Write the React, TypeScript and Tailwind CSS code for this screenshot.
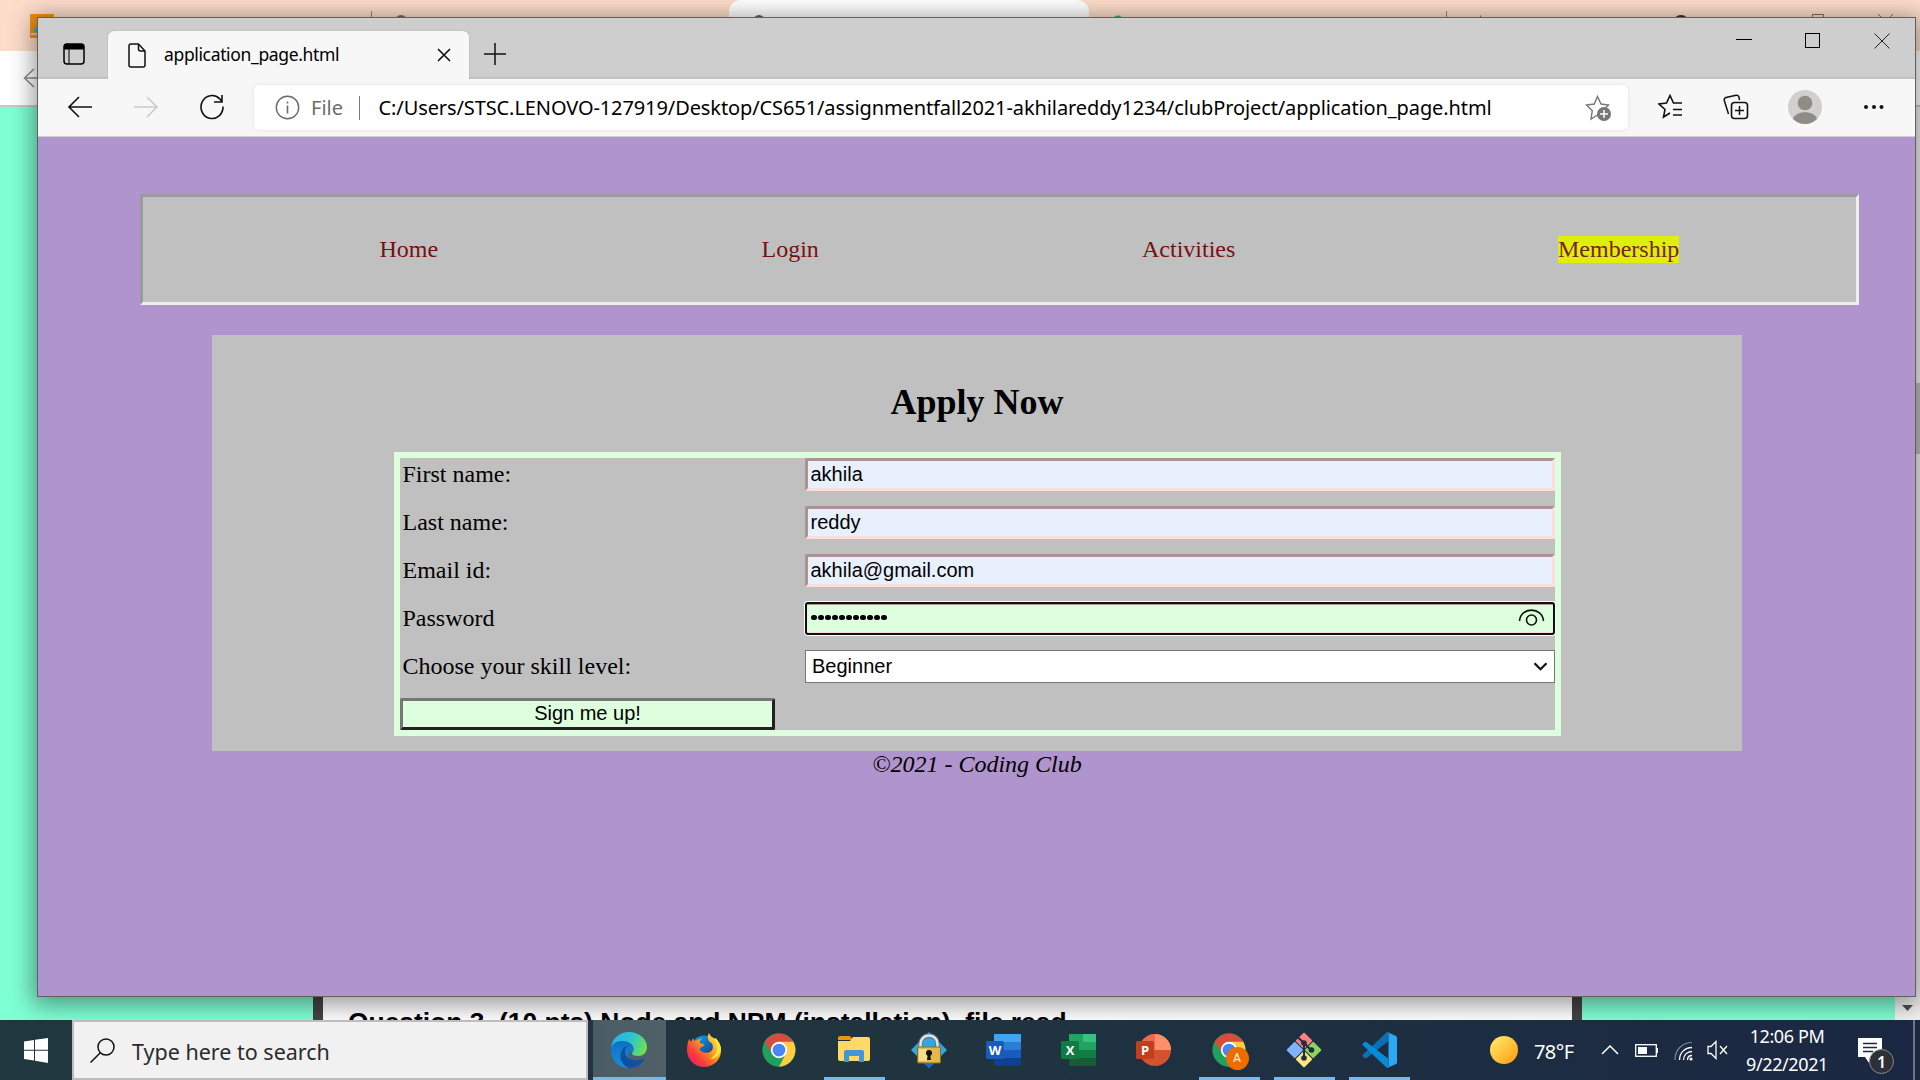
import React from "react";

const ui = "font-['Noto_Sans',sans-serif]";

function Svg({ w, h, vb, children, className = "" }: { w: number; h: number; vb?: string; children: React.ReactNode; className?: string }) {
  return (
    <svg width={w} height={h} viewBox={vb ?? `0 0 ${w} ${h}`} fill="none" className={`block shrink-0 ${className}`}>
      {children}
    </svg>
  );
}

function BackgroundWindow() {
  return (
    <div className="absolute inset-x-0 top-0 flex h-[1020px] flex-col overflow-hidden bg-[#7fffd4]">
      <div className="flex h-[51px] shrink-0 bg-[#fddcc9]">
        <Svg w={1920} h={51}>
          <rect x="30" y="14" width="24" height="24" fill="#f0930f" />
          <path d="M31 34h10" stroke="#fbd9c8" strokeWidth="1.5" />
          <circle cx="37" cy="30" r="3" fill="#35b5cc" />
          <path d="M371.500 11v14M1446.500 11v14" stroke="#9b8279" />
          <circle cx="401" cy="21" r="6" fill="#6a6a6a" />
          <path d="M729 51V12a12 12 0 0 1 12-12h336a12 12 0 0 1 12 12v39z" fill="#fff" />
          <circle cx="759" cy="21" r="6" fill="#5f6368" />
          <circle cx="1118" cy="21" r="7" fill="#d5e8db" />
          <circle cx="1118" cy="20" r="4.500" fill="#3daf6b" />
          <path d="M1480.500 15.500v10M1812.500 26V14.500h11V26M1878 14l15 15M1893 14l-15 15" stroke="#776660" />
          <circle cx="1681" cy="23" r="8" fill="#333" />
        </Svg>
      </div>
      <div className="flex h-[56px] shrink-0 items-center border-b-2 border-[#c8c8c8] bg-white pl-[23px]">
        <Svg w={26} h={20}>
          <path d="M11 1 1.500 10 11 19M1.500 10H26" stroke="#8a8a8a" strokeWidth="1.500" />
        </Svg>
      </div>
      <div className="flex flex-1">
        <div className="w-[313px]" />
        <div className="flex w-[1269px] items-end border-x-[10px] border-[#444] bg-white pl-[25px]">
          <p className="h-[12px] whitespace-nowrap font-['Liberation_Sans',sans-serif] text-[26.4px] leading-[28px] font-bold text-black">
            Question 3. (10 pts) Node and NPM (installation), file read
          </p>
        </div>
        <div className="flex-1" />
        <div className="flex w-[25px] flex-col items-end bg-[#f1f1f1]">
          <div className="mt-[276px] h-[71px] w-[22px] bg-[#c0c0c0]" />
          <Svg w={25} h={25} className="mt-auto">
            <path d="M7 10h11l-5.500 6z" fill="#505050" />
          </Svg>
        </div>
      </div>
    </div>
  );
}

function TabStrip() {
  return (
    <div className="flex h-[61px] shrink-0 items-end bg-[#cecece] shadow-[inset_0_-2px_1px_#c2c2c2]">
      <div className="flex h-full w-[70px] items-center pl-[25px] pt-[18px]">
        <Svg w={22} h={22} className="-mt-2">
          <rect x="1" y="1" width="20" height="20" rx="3" stroke="#000" strokeWidth="1.500" />
          <path d="M1 6.500V3a2 2 0 0 1 2-2h16a2 2 0 0 1 2 2v3.500z" fill="#000" />
          <path d="M6 6v15" stroke="#000" />
        </Svg>
      </div>
      <div className="flex h-[48px] w-[361px] items-center rounded-t-[6px] bg-[#f7f7f7] pl-[19px] pr-[18px] shadow-[0_0_2px_#aaa]">
        <Svg w={20} h={25}>
          <path d="M4 1h7.500L18 8v14a2 2 0 0 1-2 2H4a2 2 0 0 1-2-2V3a2 2 0 0 1 2-2zM11.500 1v5a2 2 0 0 0 2 2H18" stroke="#111" strokeWidth="1.500" />
        </Svg>
        <span className={`ml-[17px] -mt-0.5 whitespace-nowrap text-[17.500px] leading-6 tracking-[-0.35px] text-black ${ui}`}>application_page.html</span>
        <Svg w={14} h={14} className="ml-auto">
          <path d="m1 1 12 12M13 1 1 13" stroke="#111" strokeWidth="1.600" />
        </Svg>
      </div>
      <Svg w={22} h={22} className="mb-[14px] ml-[15px]">
        <path d="M11 0v22M0 11h22" stroke="#111" strokeWidth="1.500" />
      </Svg>
      <div className="ml-auto flex h-full items-start gap-[53px] pr-[25px] pt-[15px]">
        <Svg w={16} h={16}><path d="M0 6.500h16" stroke="#000" /></Svg>
        <Svg w={16} h={16}><rect x=".5" y=".5" width="14" height="14" stroke="#000" /></Svg>
        <Svg w={16} h={16}><path d="m.5.5 15 15M15.500.5l-15 15" stroke="#222" /></Svg>
      </div>
    </div>
  );
}

function AddressBar() {
  return (
    <div className="flex h-[58px] shrink-0 items-center border-b border-[#cfcfcf] bg-[#f7f7f7] pl-[29px]">
      <Svg w={26} h={22} className="-mt-0.5"><path d="M12 1 2 11l10 10M2 11h23" stroke="#111" strokeWidth="1.600" /></Svg>
      <Svg w={26} h={22} className="-mt-0.5 ml-[40px]"><path d="m14 1 10 10-10 10M24 11H1" stroke="#cbcbcb" strokeWidth="1.600" /></Svg>
      <Svg w={26} h={26} className="-mt-0.5 ml-[40px]">
        <path d="M24 12.500A11 11.500 0 1 1 20.500 4.600L22.500 7M23 1v7h-8" stroke="#111" strokeWidth="1.600" />
      </Svg>
      <div className="ml-[29px] flex h-[45px] w-[1374px] items-center rounded-[6px] bg-white pl-[21px] pr-[17px] shadow-[0_0_4px_#e2e2e2]">
        <Svg w={25} h={25} className="-mt-px">
          <circle cx="12.500" cy="12.500" r="11.200" stroke="#6c6c6c" strokeWidth="1.400" />
          <path d="M12.500 10.500v8M12.500 6.500v2" stroke="#6c6c6c" strokeWidth="1.600" />
        </Svg>
        <span className={`ml-[11px] w-[48px] text-[20px] leading-[27px] text-[#6c6c6c] ${ui}`}>File</span>
        <div className="h-[24px] w-px bg-[#777]" />
        <span className={`ml-[18.500px] -mt-px whitespace-nowrap text-[20px] leading-[27px] tracking-[-0.1px] text-black ${ui}`}>
          C:/Users/STSC.LENOVO-127919/Desktop/CS651/assignmentfall2021-akhilareddy1234/clubProject/application_page.html
        </span>
        <Svg w={26} h={26} className="ml-auto">
          <path d="M15 21.500 12.500 20 6 24l1.300-8.300L1.500 10l7.800-1L12.500 1.500 16 9l7.500 1-3 3" stroke="#777" strokeWidth="1.400" />
          <circle cx="19" cy="19" r="7" fill="#767676" />
          <path d="M19 15v8M15 19h8" stroke="#fff" strokeWidth="1.500" />
        </Svg>
      </div>
      <div className="-mt-0.5 flex flex-1 items-center pl-[30px]">
        <Svg w={25} h={25}>
          <path d="M12 19 5.500 23 7 15.500 1 10l7.500-1L12 1.500 15.500 9H24M15 15.500h9M15 21h9" stroke="#111" strokeWidth="1.600" />
        </Svg>
        <Svg w={26} h={26} className="ml-[40px]">
          <path d="M5.500 20 1.300 6.500a2.500 2.500 0 0 1 1.700-3L13 1.200a2.500 2.500 0 0 1 3 2L16.500 6" stroke="#111" strokeWidth="1.500" />
          <rect x="8.500" y="8.500" width="16" height="16" rx="3" stroke="#111" strokeWidth="1.600" />
          <path d="M16.500 12v9M12 16.500h9" stroke="#111" strokeWidth="1.500" />
        </Svg>
        <Svg w={34} h={34} className="ml-[39px]">
          <circle cx="17" cy="17" r="17" fill="#d2d0ce" />
          <circle cx="17" cy="13" r="7.300" fill="#8f8b87" />
          <path d="M5 29c2-9 22-9 24 0a17 17 0 0 1-24 0z" fill="#8f8b87" />
        </Svg>
        <Svg w={22} h={6} className="ml-[41px]">
          <circle cx="3" cy="3" r="2" fill="#111" /><circle cx="11" cy="3" r="2" fill="#111" /><circle cx="18.500" cy="3" r="2" fill="#111" />
        </Svg>
      </div>
    </div>
  );
}

function TextRow({ label, value }: { label: string; value: string }) {
  return (
    <div className="flex h-[33px]">
      <label className="w-[405px] pl-[2.500px] text-[24px] leading-[33px]">{label}</label>
      <input
        readOnly
        value={value}
        className="h-[33px] w-[750px] rounded-[2px] border-[3px] border-t-[#a99292] border-r-[#ffdcdc] border-b-[#ffdcdc] border-l-[#a99292] bg-[#e8f0fe] px-[2.500px] font-['Liberation_Sans',sans-serif] text-[20px] leading-[27px] text-black"
      />
    </div>
  );
}

function ClubPage() {
  return (
    <div className="h-[859px] bg-[#b094cd] pl-[102px] pt-[57px] font-['Liberation_Serif',serif] text-black">
      <nav className="flex h-[111px] w-[1719px] border-[3px] border-t-[#9a9a9a] border-r-[#eeeeee] border-b-[#eeeeee] border-l-[#9a9a9a] bg-[#c0c0c0] pl-[236.500px] pt-[39px] text-[24px] leading-[27px] text-[#761111]">
        <a className="w-[382px]">Home</a>
        <a className="w-[380.500px]">Login</a>
        <a className="w-[416px]">Activities</a>
        <a className="h-[27px] bg-[#dfee0c] text-[#7a1f11]">Membership</a>
      </nav>
      <main className="mt-[30px] ml-[72px] h-[416px] w-[1530px] bg-[#c0c0c0] pt-[46.500px]">
        <h2 className="text-center text-[36px] leading-[41px] font-bold">Apply Now</h2>
        <form className="mt-[29.500px] ml-[182px] flex h-[284px] w-[1167px] flex-col gap-[15px] border-[6px] border-[#ddffdd]">
          <TextRow label="First name:" value="akhila" />
          <TextRow label="Last name:" value="reddy" />
          <TextRow label="Email id:" value="akhila@gmail.com" />
          <div className="flex h-[33px]">
            <label className="w-[405px] pl-[2.500px] text-[24px] leading-[33px]">Password</label>
            <div className="flex w-[750px] items-center justify-between rounded-[3px] border-2 border-[#101010] bg-[#ddffdd] pl-[4px] pr-[8px] shadow-[0_0_0_1px_white,inset_0_1px_0_#a99292,inset_0_-1px_0_#ffdcdc]">
              <div className="-mt-0.5 flex">
                {Array.from({ length: 11 }, (_, i) => (
                  <span key={i} className="flex w-[7px] justify-start"><i className="h-[5.500px] w-[5.500px] rounded-full bg-black" /></span>
                ))}
              </div>
              <Svg w={27} h={18} className="-mt-0.5">
                <path d="M1.500 12C2.500-2.500 24.500-2.500 25.500 12" stroke="#111" strokeWidth="1.600" />
                <circle cx="13.500" cy="11" r="5" stroke="#111" strokeWidth="1.600" />
              </Svg>
            </div>
          </div>
          <div className="flex h-[33px]">
            <label className="w-[405px] pl-[2.500px] text-[24px] leading-[33px]">Choose your skill level:</label>
            <div className="flex w-[750px] items-center justify-between border border-[#767676] bg-white pb-px pl-[6px] pr-[6px] font-['Liberation_Sans',sans-serif] text-[20px] leading-[30px]">
              <span>Beginner</span>
              <Svg w={15} h={9}><path d="m1.500 1.200 6 6 6-6" stroke="#111" strokeWidth="2.200" /></Svg>
            </div>
          </div>
          <button type="button" className="h-[32px] w-[375px] shrink-0 rounded-[2px] border-[3px] border-t-[#767676] border-r-[#212121] border-b-[#212121] border-l-[#767676] bg-[#ddffdd] pb-[2px] font-['Liberation_Sans',sans-serif] text-[20px] leading-[24px]">
            Sign me up!
          </button>
        </form>
      </main>
      <footer className="ml-[72px] w-[1530px] text-center text-[24px] leading-[27px] italic">©2021 - Coding Club</footer>
    </div>
  );
}

function EdgeIcon() {
  return (
    <Svg w={36} h={36}>
      <defs>
        <linearGradient id="eg1" x1="0" y1=".3" x2="1" y2=".6"><stop stopColor="#2bb3e8" /><stop offset=".5" stopColor="#2cc3d2" /><stop offset="1" stopColor="#6fe04f" /></linearGradient>
        <linearGradient id="eg2" x1="0" y1="0" x2="0" y2="1"><stop stopColor="#0f6fc4" /><stop offset="1" stopColor="#1390e0" /></linearGradient>
      </defs>
      <path d="M0 16C1 6 9 0 18 0c10 0 18 7 18 15 0 6-4 9-9 9-4 0-6-1-6-2.500 0-1 1.500-2 1.500-4.500 0-4-4-7.500-10-7.500C7 9.500 2 12 0 16z" fill="url(#eg1)" />
      <path d="M0 18C0 12 5 9 11 9c6 0 11.500 3.500 11.500 8 0 2-1 3-1.500 4-2-3-5 0-3 4 3 6 8 7 15 3-3 6-10 8-15 8C7 36 0 28 0 18z" fill="url(#eg2)" />
      <path d="M17.500 13c-5 2-8 6-8 11 0 6 4 11 9 12 6 0 12-3 14.500-8 .5-1-.3-1.400-1.200-1C25 30 14 28 14 19c0-3 1.500-5 3.500-6z" fill="#10509c" />
    </Svg>
  );
}

function FirefoxIcon() {
  return (
    <Svg w={34} h={34}>
      <defs>
        <linearGradient id="ff1" x1="1" y1="0" x2="0" y2="1"><stop stopColor="#fff14a" /><stop offset=".4" stopColor="#ffa21d" /><stop offset=".7" stopColor="#fa3c3c" /><stop offset="1" stopColor="#e5107f" /></linearGradient>
        <linearGradient id="ff2" x1="0" y1="0" x2="1" y2="1"><stop stopColor="#00b3f4" /><stop offset="1" stopColor="#2a1d78" /></linearGradient>
      </defs>
      <circle cx="17" cy="15" r="12.500" fill="url(#ff2)" />
      <path d="M2 6c1 1 1.500 2 2 3l2-4c.5 1.500 1 2 2 3 2-1 4-2 7-2.500-2 1.500-2.500 3-2 5 2 0 3 .5 4.500 1-1 2-3.500 2.500-5 4 1 4 5 5 9 4 5-1 5-6 3.500-9C22 9 19 5 22 0c1 3 3 4 6 6l.5-1C32 9 34 13 34 18c0 9-8 16-17 16S0 27 0 17C0 12 1 9 2 6z" fill="url(#ff1)" />
      <path d="M22 0c1 3 5 5 7 10 3 8-1 13-6 16 7 0 11-5 11-11C33 9 30 7 28.500 5l-.5 1c-3-2-5-3-6-6z" fill="#ffe33e" />
    </Svg>
  );
}

function ChromeIcon() {
  return (
    <Svg w={34} h={34} vb="0 0 48 48">
      <circle cx="24" cy="24" r="23.500" fill="#1fa15d" />
      <path d="M3.800 12.500A23.500 23.500 0 0 1 44.200 12.500L44 13H24L14.500 29.500z" fill="#db4a3e" />
      <path d="M44.200 12.500A23.500 23.500 0 0 1 24 47.500L33.500 29.500 34 18l-10-5.500z" fill="#ffcd42" />
      <circle cx="24" cy="24" r="11.500" fill="#fff" />
      <circle cx="24" cy="24" r="9" fill="#4687f4" />
    </Svg>
  );
}

function FolderIcon() {
  return (
    <Svg w={32} h={28}>
      <path d="M0 2a2 2 0 0 1 2-2h10l3 4H0z" fill="#e09a0c" />
      <path d="M0 5h12l3-4h15a2 2 0 0 1 2 2v20a2 2 0 0 1-2 2H2a2 2 0 0 1-2-2z" fill="#ffd866" />
      <path d="M6 26V16a2 2 0 0 1 2-2h16a2 2 0 0 1 2 2v10h-5v-6H11v6z" fill="#3f97d9" />
    </Svg>
  );
}

function LockIcon() {
  return (
    <Svg w={36} h={36}>
      <path d="M18 0 36 18 18 36 0 18z" fill="#2fa8e8" />
      <path d="m18 21 8 8-8 7-8-7z" fill="#1c63d4" />
      <path d="M9.500 16v-4a8.500 8.500 0 0 1 17 0v4" stroke="#66737a" strokeWidth="4.500" />
      <path d="M9.500 16v-4a8.500 8.500 0 0 1 17 0v4" stroke="#dfe6e8" strokeWidth="2.500" />
      <rect x="6.500" y="15" width="23" height="16" rx="1" fill="#e3b94c" stroke="#8b6a1c" />
      <path d="M8 17h8v12H8z" fill="#f3dc8c" />
      <circle cx="18" cy="21" r="3" fill="#111" /><path d="M17 22h2l1 6h-4z" fill="#111" />
    </Svg>
  );
}

function OfficeIcon({ kind }: { kind: "W" | "X" | "P" }) {
  const tile = { W: "#185abd", X: "#107c41", P: "#c43e1c" }[kind];
  return (
    <Svg w={36} h={32}>
      {kind === "W" && <><rect x="8" width="27" height="32" rx="1.500" fill="#103f91" /><path d="M8 0h27v8H8z" fill="#41a5ee" /><path d="M8 8h27v8H8z" fill="#2b7cd3" /><path d="M8 16h27v8H8z" fill="#185abd" /></>}
      {kind === "X" && <><rect x="8" width="27" height="32" rx="1.500" fill="#185c37" /><path d="M8 0h14v16H8z" fill="#21a366" /><path d="M22 0h13v8H22z" fill="#33c481" /><path d="M22 8h13v8H22z" fill="#21a366" /><path d="M8 16h14v8H8z" fill="#107c41" /><path d="M22 16h13v8H22z" fill="#107c41" /></>}
      {kind === "P" && <><circle cx="19" cy="16" r="16" fill="#d35230" /><path d="M19 0v16H3A16 16 0 0 1 19 0z" fill="#ed6c47" /><path d="M19 0a16 16 0 0 1 16 16H19z" fill="#ff8f6b" /></>}
      <rect y="7" width="18" height="18" rx="1.500" fill={tile} />
      <text x="9" y="20.800" fill="#fff" fontFamily="Open Sans, sans-serif" fontWeight="700" fontSize="13" textAnchor="middle">{kind}</text>
    </Svg>
  );
}

function ChromeProfileIcon() {
  return (
    <div className="relative">
      <ChromeIcon />
      <div className="absolute top-[14px] left-[14px] flex h-[23px] w-[23px] items-center justify-center rounded-full bg-[#ed6c00] font-['Roboto',sans-serif] text-[12px] font-medium text-[#ffe3cf]">A</div>
    </div>
  );
}

function GitIcon() {
  return (
    <Svg w={36} h={36}>
      <g transform="rotate(45 18 18)">
        <rect x="5.500" y="5.500" width="12" height="12" rx="1" fill="#ff8080" />
        <rect x="18.500" y="5.500" width="12" height="12" rx="1" fill="#8ed35f" />
        <rect x="5.500" y="18.500" width="12" height="12" rx="1" fill="#80b3ff" />
        <rect x="18.500" y="18.500" width="12" height="12" rx="1" fill="#ffe680" />
      </g>
      <path d="M12 5.500 18 11v15M18 11l7 7" stroke="#20303f" strokeWidth="2" />
      <circle cx="18" cy="11" r="2.800" fill="#20303f" /><circle cx="25.500" cy="18" r="2.800" fill="#20303f" /><circle cx="18" cy="26" r="2.800" fill="#20303f" />
    </Svg>
  );
}

function CodeIcon() {
  return (
    <Svg w={36} h={36}>
      <path d="M1 23.500 3.500 26q1 .6 2 0L27 9.500V0h-1z" fill="#0b70b5" />
      <path d="M1 12.500 3.500 10q1-.6 2 0L27 26.500V36h-1z" fill="#0a8ad6" />
      <path d="m26 0 9 4q1 .6 1 1.500v25q0 1-1 1.500l-9 4q1.500-1 1.500-2V2Q27.500.8 26 0z" fill="#2aa9f5" />
    </Svg>
  );
}

function TaskItem({ children, state = "idle" }: { children: React.ReactNode; state?: "idle" | "open" | "active" }) {
  return (
    <div className={`flex h-[60px] flex-col items-center ${state === "active" ? "mr-px w-[73px] bg-gradient-to-r from-[#4a5d65] to-[#4f6067]" : "w-[75px]"}`}>
      <div className="flex h-[57px] items-center pt-[2px] pr-[2px]">{children}</div>
      {state === "open" && <div className="h-[3px] w-[61px] bg-[#76b9ed]" />}
      {state === "active" && <div className="h-[3px] w-[73px] bg-[#76b9ed]" />}
    </div>
  );
}

function Taskbar() {
  return (
    <div className="relative flex h-[60px] shrink-0 bg-gradient-to-r from-[#20373f] via-[#203440] to-[#1a2742]">
      <div className="flex w-[72px] items-center justify-center">
        <Svg w={24} h={25}>
          <path d="M0 3.500 10 2v9.700H0zM11 1.800 24 0v11.700H11zM0 12.800h10V22.500L0 21zM11 12.800h13V25l-13-2.200z" fill="#fff" />
        </Svg>
      </div>
      <div className="flex w-[516px] items-center border-2 border-[#bdbdbd] bg-[#f1f1f1] pl-[16px]">
        <Svg w={25} h={25}>
          <circle cx="16" cy="9" r="8" stroke="#111" strokeWidth="1.500" /><path d="m10.500 14.500-10 10" stroke="#111" strokeWidth="1.500" />
        </Svg>
        <span className={`mt-[3px] ml-[17px] text-[21.500px] leading-[28px] whitespace-nowrap text-[#2b2b2b] ${ui}`}>Type here to search</span>
      </div>
      <div className="ml-[5px] flex">
        <TaskItem state="active"><EdgeIcon /></TaskItem>
        <TaskItem><FirefoxIcon /></TaskItem>
        <TaskItem><ChromeIcon /></TaskItem>
        <TaskItem state="open"><FolderIcon /></TaskItem>
        <TaskItem><LockIcon /></TaskItem>
        <TaskItem><OfficeIcon kind="W" /></TaskItem>
        <TaskItem><OfficeIcon kind="X" /></TaskItem>
        <TaskItem><OfficeIcon kind="P" /></TaskItem>
        <TaskItem state="open"><ChromeProfileIcon /></TaskItem>
        <TaskItem state="open"><GitIcon /></TaskItem>
        <TaskItem state="open"><CodeIcon /></TaskItem>
      </div>
      <div className={`ml-[73px] flex flex-1 items-center text-white ${ui}`}>
        <div className="h-[28px] w-[28px] rounded-full bg-gradient-to-br from-[#ffed70] via-[#ffc63c] to-[#ff9500]" />
        <span className="mt-[4px] ml-[16px] w-[67px] text-[20px] tracking-[-0.6px]">78°F</span>
        <Svg w={18} h={10}><path d="m1 9 8-8 8 8" stroke="#fff" strokeWidth="1.500" /></Svg>
        <Svg w={23} h={13} className="ml-[16px]">
          <rect x=".7" y=".7" width="20.600" height="11.600" stroke="#fff" strokeWidth="1.300" /><path d="M3 3h9v7H3zM21 4h2v5h-2z" fill="#fff" />
        </Svg>
        <Svg w={20} h={20} className="mt-px ml-[16px]">
          <path d="M1 19C1 9 8 1.500 18 1.500" stroke="#7e8794" strokeWidth="1.200" />
          <path d="M5.500 19C5.500 12 10.500 6.500 18 6.500M9.500 19c0-5 3.500-8.500 8.500-8.500M13.500 19c0-3 2-4.500 4.500-4.500" stroke="#fff" strokeWidth="1.300" />
          <circle cx="17" cy="18" r="1.600" fill="#fff" />
        </Svg>
        <Svg w={22} h={20} className="ml-[13px]">
          <path d="M1 6.500h3L9 1.500v17l-5-5H1zM13 6l7 8M20 6l-7 8" stroke="#fff" strokeWidth="1.300" />
        </Svg>
        <div className="-mt-px ml-[14px] flex w-[88px] flex-col items-center text-[18px] leading-[28px] tracking-[-0.4px] whitespace-nowrap">
          <span>12:06 PM</span>
          <span>9/22/2021</span>
        </div>
        <div className="relative ml-[27px] h-[36px] w-[36px]">
          <Svg w={25} h={26} className="mt-[6px]">
            <path d="M0 0h24v19h-9l-4 6-4-6H0z" fill="#fff" /><path d="M5 5.500h14M5 9.500h14M5 13.500h10" stroke="#1b2a40" strokeWidth="1.300" />
          </Svg>
          <div className="absolute top-[17px] left-[11px] flex h-[25px] w-[25px] items-center justify-center rounded-full border border-[#888] bg-[#2d3036] text-[16px] font-semibold">1</div>
        </div>
      </div>
      <div className="mr-[5px] w-[2px] bg-[#6e7683]" />
    </div>
  );
}

export default function App() {
  return (
    <div className="relative flex h-[1080px] w-[1920px] flex-col justify-end overflow-hidden">
      <BackgroundWindow />
      <div className="absolute top-[17px] left-[37px] flex h-[980px] w-[1879px] flex-col border border-[#606060] shadow-[0_4px_22px_4px_rgba(0,0,0,0.4)]">
        <TabStrip />
        <AddressBar />
        <ClubPage />
      </div>
      <Taskbar />
    </div>
  );
}
